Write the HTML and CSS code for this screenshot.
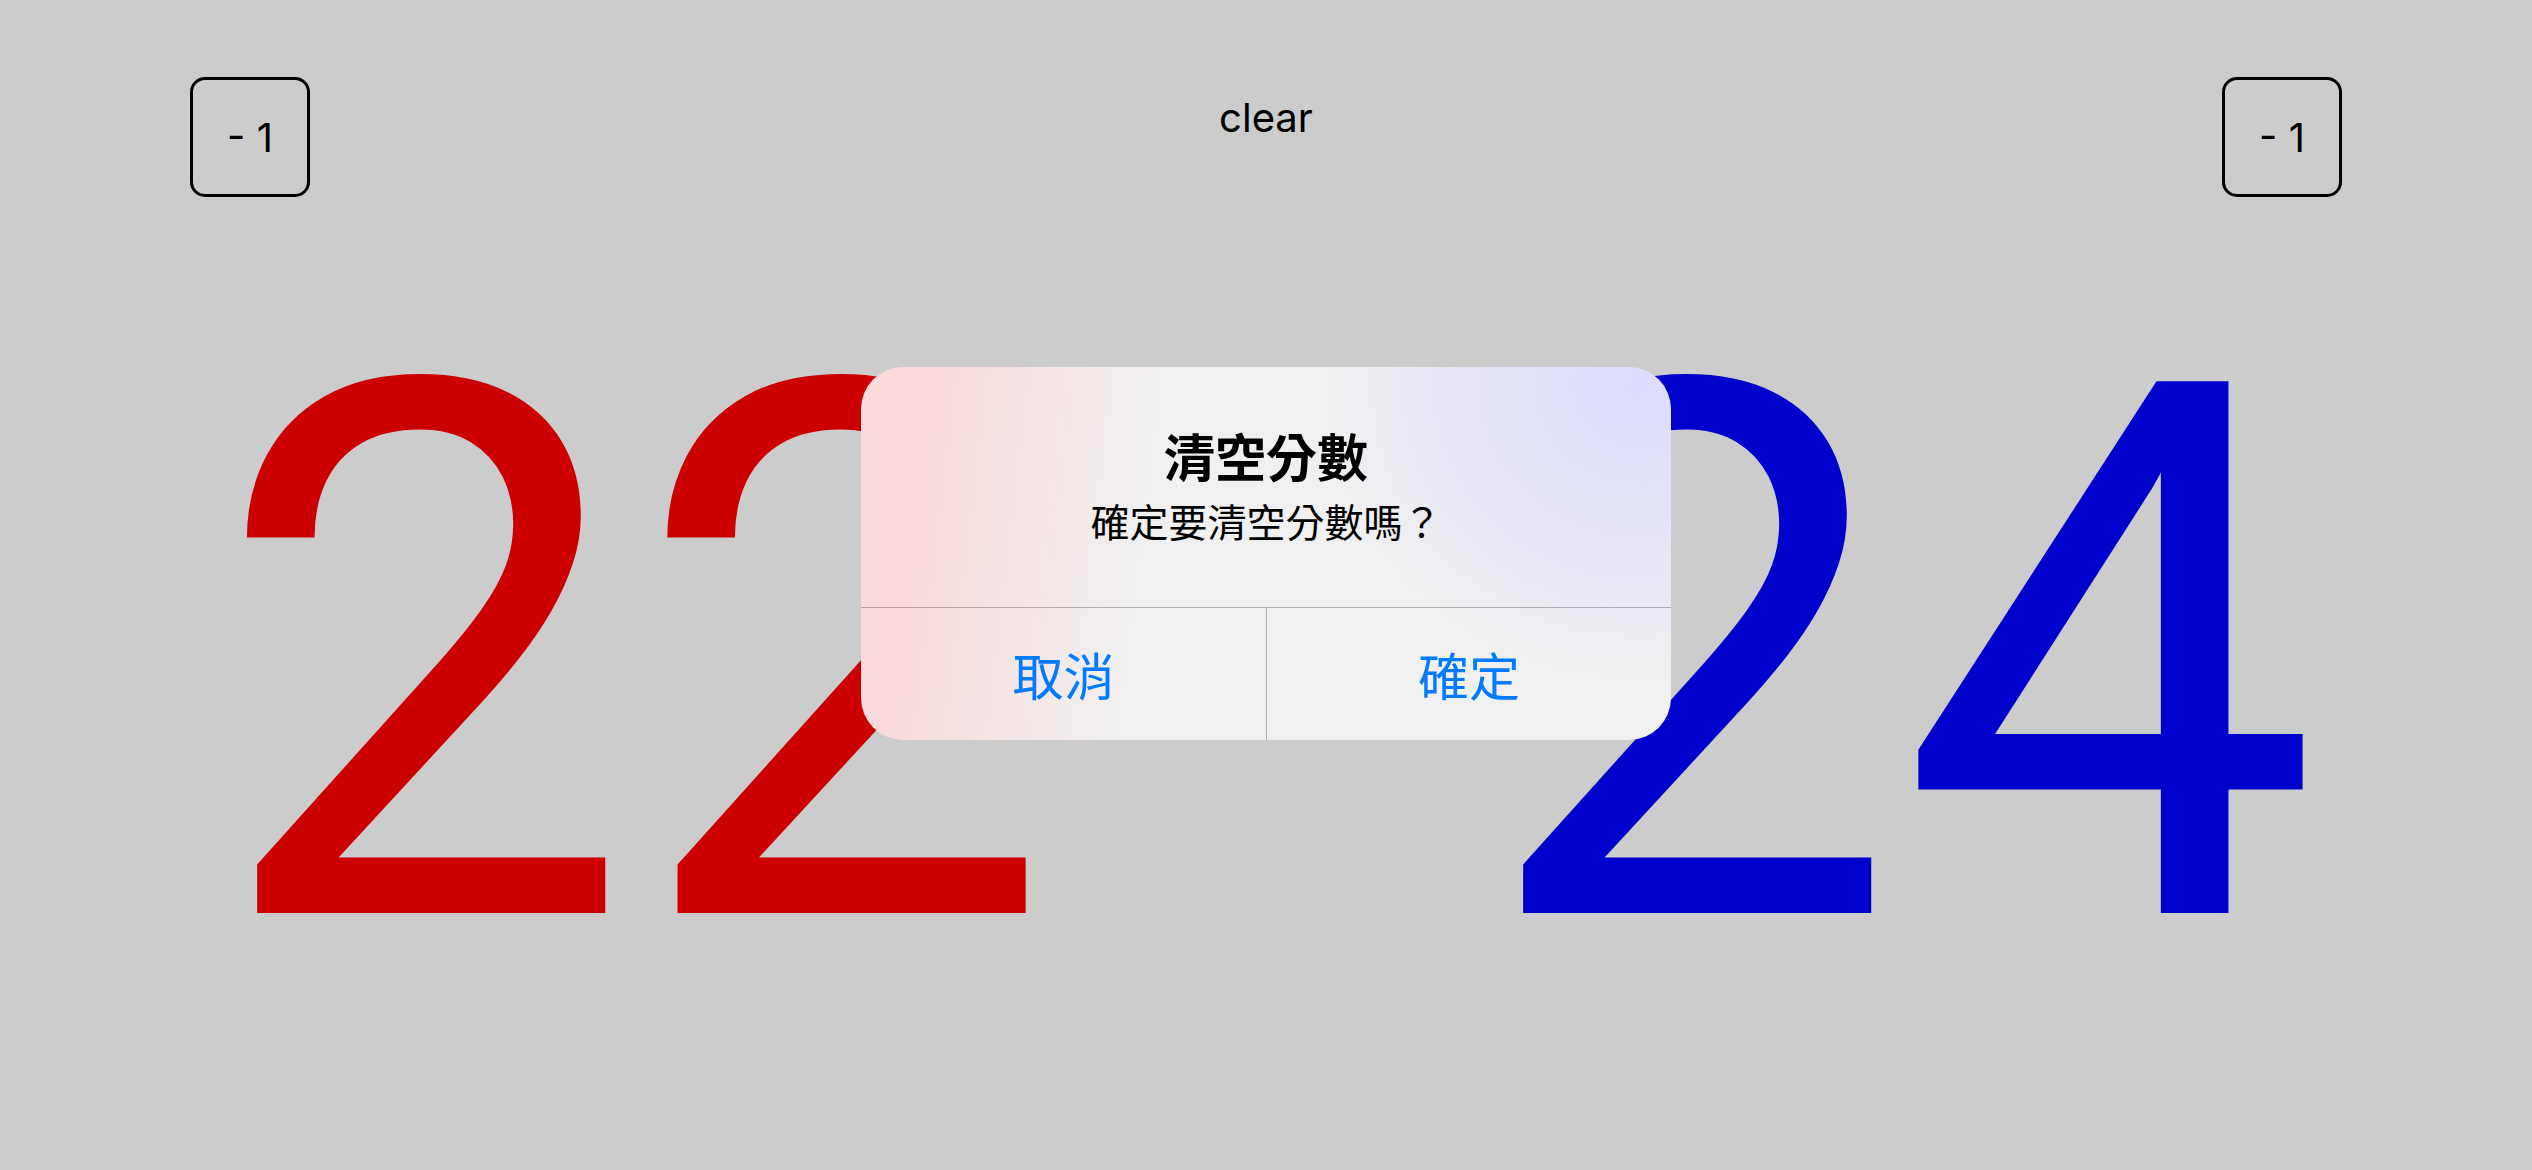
FILE: index.html
```html
<!DOCTYPE html>
<html lang="zh-Hant">
<head>
<meta charset="utf-8">
<meta name="viewport" content="width=device-width, initial-scale=1">
<title>Scoreboard</title>
<link rel="stylesheet" href="styles.css">
</head>
<body>
<main class="board">
  <header class="toolbar">
    <button class="minus" type="button">- 1</button>
    <button class="clear" type="button">clear</button>
    <button class="minus" type="button">- 1</button>
  </header>
  <section class="scores">
    <div class="score home">22</div>
    <div class="score away">24</div>
  </section>
</main>
<div class="overlay">
  <div class="dialog" role="alertdialog" aria-modal="true" aria-labelledby="title" aria-describedby="message">
    <div class="content">
      <h1 id="title">清空分數</h1>
      <p id="message">確定要清空分數嗎？</p>
    </div>
    <div class="actions">
      <button type="button">取消</button>
      <button type="button">確定</button>
    </div>
  </div>
</div>
</body>
</html>
```
FILE: styles.css
```css
* { box-sizing: border-box; }
body {
  margin: 0;
  min-height: 100vh;
  background: #ccc;
  color: #000;
  font-family: Inter, "Noto Sans CJK TC", sans-serif;
}
button {
  padding: 0;
  border: 0;
  background: none;
  color: inherit;
  font: inherit;
}
.toolbar {
  display: flex;
  justify-content: space-between;
  align-items: flex-start;
  padding: 77px 190px 0;
  font-size: 40px;
}
.minus {
  width: 120px;
  height: 120px;
  border: 3px solid #000;
  border-radius: 15px;
}
.clear { height: 80px; }
.scores {
  display: grid;
  grid-template-columns: 1fr 1fr;
  font-family: Roboto, sans-serif;
  font-size: 748px;
  line-height: 922px;
}
.score { text-align: center; }
.home { color: #c00; }
.away { color: #00c; }
.overlay {
  position: absolute;
  inset: 0;
  display: flex;
  justify-content: center;
  align-items: flex-start;
  padding-top: 367px;
}
.dialog {
  width: 810px;
  border-radius: 42px;
  overflow: hidden;
  text-align: center;
  background:
    radial-gradient(ellipse 320px 300px at 96% 5%, #dcdcfe, #e5e5f6 50%, #efeff000),
    linear-gradient(97deg, #fadada 8%, #f4e6e6 22%, #f0f0f0 36%);
}
.content {
  height: 241px;
  padding-top: 60px;
  border-bottom: 1px solid #0004;
}
h1 { margin: 0; font-size: 51px; line-height: 64px; font-weight: 700; }
p { margin: 0; font-size: 39px; line-height: 64px; }
.actions {
  display: grid;
  grid-template-columns: 1fr 1fr;
  height: 132px;
  color: #007aff;
  font-size: 51px;
}
.actions button + button { border-left: 1px solid #0004; }
```
